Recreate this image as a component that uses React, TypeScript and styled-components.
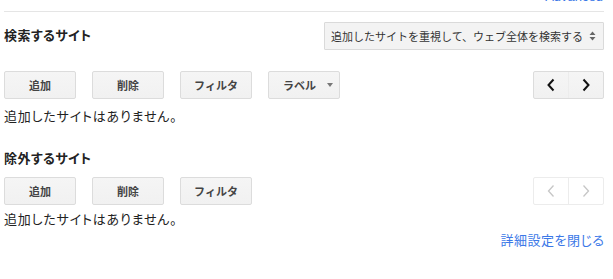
import React from "react";
import styled, { createGlobalStyle } from "styled-components";

const Global = createGlobalStyle`
  html, body { margin: 0; padding: 0; background: #fff; }
  body {
    font-family: "Liberation Sans", Arial, "Noto Sans CJK JP", sans-serif;
    color: #222;
    font-size: 13px;
  }
`;

const Page = styled.div`
  width: 600px;
  padding: 0 9px 0 4px;
`;

const TopBar = styled.div`
  height: 11px;
  border-bottom: 1px solid #e5e5e5;
  display: flex;
  justify-content: flex-end;
  align-items: flex-start;
`;

const Link = styled.a`
  color: #3b78e7;
  font-size: 13px;
  line-height: 15px;
  text-decoration: none;
  cursor: pointer;
`;

const TopLink = styled(Link)`
  margin-top: -11px;
  margin-right: 1px;
`;

const HeaderRow = styled.div<{ $mt: number; $minH?: number }>`
  display: flex;
  justify-content: space-between;
  align-items: center;
  margin-top: ${(p) => p.$mt}px;
  min-height: ${(p) => p.$minH ?? 0}px;
`;

const Heading = styled.div`
  font-weight: bold;
  font-size: 13px;
  line-height: 18px;
  color: #222;
  font-feature-settings: "palt";
  letter-spacing: 0.4px;
`;

const Select = styled.div`
  height: 28px;
  box-sizing: border-box;
  display: flex;
  align-items: center;
  gap: 6px;
  padding: 0 5px 0 6px;
  background: #f3f3f3;
  border: 1px solid #dadada;
  border-radius: 1px;
  font-size: 11px;
  color: #333;
  width: 280px;
`;

const ButtonRow = styled.div<{ $mt: number }>`
  display: flex;
  align-items: center;
  gap: 16px;
  margin-top: ${(p) => p.$mt}px;
`;

const Button = styled.button`
  width: 72px;
  height: 28px;
  box-sizing: border-box;
  display: flex;
  align-items: center;
  justify-content: center;
  gap: 11px;
  padding: 0;
  background: linear-gradient(#f5f5f5, #f1f1f1);
  border: 1px solid #dcdcdc;
  border-radius: 2px;
  font-family: inherit;
  font-size: 11px;
  font-weight: bold;
  color: #444;
  cursor: pointer;
`;

const Caret = styled.span`
  width: 0;
  height: 0;
  border-left: 3.5px solid transparent;
  border-right: 3.5px solid transparent;
  border-top: 4px solid #777;
  margin-right: -8px;
`;

const Pager = styled.div<{ $disabled?: boolean }>`
  margin-left: auto;
  display: flex;
  width: 71px;
  height: 28px;
  box-sizing: border-box;
  border: 1px solid ${(p) => (p.$disabled ? "#ececec" : "#dcdcdc")};
  border-radius: 2px;
  background: ${(p) => (p.$disabled ? "#fff" : "linear-gradient(#f5f5f5, #f1f1f1)")};
  color: ${(p) => (p.$disabled ? "#c6c6c6" : "#111")};
`;

const PagerHalf = styled.div<{ $divider?: string }>`
  flex: 1;
  display: flex;
  align-items: center;
  justify-content: center;
  & + & {
    border-left: 1px solid ${(p) => p.$divider || "#dcdcdc"};
  }
`;

const Empty = styled.div<{ $mt: number }>`
  margin-top: ${(p) => p.$mt}px;
  font-size: 13px;
  line-height: 18px;
  color: #222;
  font-feature-settings: "palt";
  letter-spacing: 0.8px;
`;

const Footer = styled.div`
  display: flex;
  justify-content: flex-end;
  margin-top: 3px;
`;

const FooterLink = styled(Link)`
  line-height: 18px;
  font-feature-settings: "palt";
  letter-spacing: 0.5px;
  margin-right: -0.5px;
`;

const Chevron = ({ dir, width = 2 }: { dir: "l" | "r"; width?: number }) => (
  <svg width="10" height="14" viewBox="0 0 10 14">
    <path
      d={dir === "l" ? "M7.5 1.5 L2.5 7 L7.5 12.5" : "M2.5 1.5 L7.5 7 L2.5 12.5"}
      fill="none"
      stroke="currentColor"
      strokeWidth={width}
    />
  </svg>
);

const UpDown = () => (
  <svg width="7" height="10" viewBox="0 0 7 10">
    <path d="M0.5 4 L3.5 0.5 L6.5 4 Z M0.5 6 L3.5 9.5 L6.5 6 Z" fill="#666" />
  </svg>
);

export default function App() {
  return (
    <>
      <Global />
      <Page>
        <TopBar>
          <TopLink>Advanced</TopLink>
        </TopBar>

        <HeaderRow $mt={10} $minH={28}>
          <Heading>検索するサイト</Heading>
          <Select>
            <span>追加したサイトを重視して、ウェブ全体を検索する</span>
            <UpDown />
          </Select>
        </HeaderRow>

        <ButtonRow $mt={21}>
          <Button>追加</Button>
          <Button>削除</Button>
          <Button>フィルタ</Button>
          <Button>
            ラベル<Caret />
          </Button>
          <Pager>
            <PagerHalf>
              <Chevron dir="l" />
            </PagerHalf>
            <PagerHalf>
              <Chevron dir="r" />
            </PagerHalf>
          </Pager>
        </ButtonRow>
        <Empty $mt={9}>追加したサイトはありません。</Empty>

        <HeaderRow $mt={24}>
          <Heading>除外するサイト</Heading>
        </HeaderRow>

        <ButtonRow $mt={9}>
          <Button>追加</Button>
          <Button>削除</Button>
          <Button>フィルタ</Button>
          <Pager $disabled>
            <PagerHalf $divider="#ececec">
              <Chevron dir="l" width={1.3} />
            </PagerHalf>
            <PagerHalf $divider="#ececec">
              <Chevron dir="r" width={1.3} />
            </PagerHalf>
          </Pager>
        </ButtonRow>
        <Empty $mt={6}>追加したサイトはありません。</Empty>

        <Footer>
          <FooterLink>詳細設定を閉じる</FooterLink>
        </Footer>
      </Page>
    </>
  );
}
